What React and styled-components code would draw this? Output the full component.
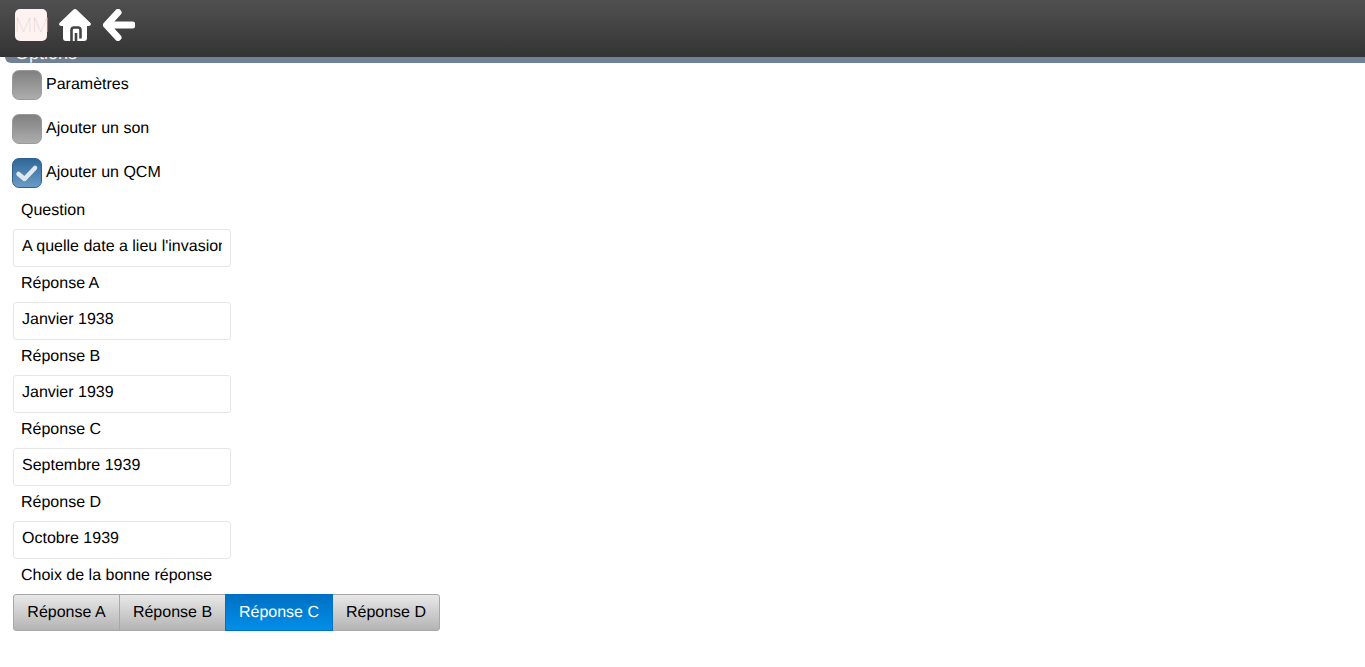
import React from 'react';
import styled, { createGlobalStyle } from 'styled-components';

const GlobalStyle = createGlobalStyle`
  html, body {
    margin: 0;
    padding: 0;
    background: #fff;
    font-family: "Liberation Sans", Arial, sans-serif;
    font-size: 16px;
    color: #000;
    text-rendering: geometricPrecision;
  }
`;

const Page = styled.div`
  width: 1365px;
  height: 667px;
  overflow: hidden;
`;
const Header = styled.header`
  height: 57px;
  display: flex;
  align-items: flex-start;
  gap: 12px;
  padding: 9px 0 0 15px;
  box-sizing: border-box;
  background: linear-gradient(#4f4f4f, #4a4a4a 25%, #333333);
  position: relative;
  z-index: 1;
`;
const Logo = styled.div`
  width: 32px;
  height: 32px;
  border-radius: 5px;
  background: #fff3f2;
  color: #e6cfcd;
  font-family: Roboto, sans-serif;
  font-weight: 100;
  font-size: 20px;
  line-height: 32px;
  text-align: center;
`;
const IconSlot = styled.svg`
  width: 32px;
  height: 32px;
  display: block;
`;
const Strip = styled.div`
  height: 6px;
  margin-left: 5px;
  background: #6f8196;
  border-radius: 0 0 0 10px;
  overflow: hidden;
  position: relative;
`;
const StripTitle = styled.span`
  position: absolute;
  left: 10px;
  top: -14px;
  color: #f0f0f0;
  font-size: 18px;
  line-height: 20px;
`;
const Content = styled.main`
  padding: 7px 0 0 12px;
`;
const CheckRow = styled.div`
  display: flex;
  align-items: center;
  gap: 4px;
  height: 30px;
  margin-bottom: 14px;
`;
const Box = styled.div`
  width: 30px;
  height: 30px;
  box-sizing: border-box;
  border-radius: 7px;
  border: 1px solid ${({ $on }) => ($on ? '#2f5f8f' : '#9a9a9a')};
  background: ${({ $on }) =>
    $on ? 'linear-gradient(#2f6799, #6a9cc6)' : 'linear-gradient(#808080, #adadad)'};
  display: flex;
  align-items: center;
  justify-content: center;
`;
const Form = styled.div`
  margin-top: 1px;
  padding-left: 1px;
`;
const Label = styled.div`
  height: 18px;
  line-height: 18px;
  padding-left: 8px;
  margin-bottom: 9px;
`;
const Field = styled.input`
  display: block;
  width: 218px;
  height: 38px;
  box-sizing: border-box;
  border: 1px solid #e6e6e6;
  border-radius: 3px;
  padding: 0 8px 2px;
  margin: 0 0 8px;
  outline: none;
  background: #fff;
  color: #000;
  font-family: "Liberation Sans", Arial, sans-serif;
  font-size: 16px;
  text-rendering: geometricPrecision;
`;
const Segments = styled.div`
  display: flex;
  height: 37px;
`;
const Segment = styled.div`
  width: ${({ $wide }) => ($wide ? '108px' : '107px')};
  box-sizing: border-box;
  line-height: 35px;
  text-align: center;
  color: ${({ $on }) => ($on ? '#fff' : '#000')};
  background: ${({ $on }) =>
    $on ? 'linear-gradient(#0070c4, #008fe8)' : 'linear-gradient(#e8e8e8, #b4b4b4)'};
  border: 1px solid ${({ $on }) => ($on ? '#0070c4' : '#a8a8a8')};
  margin-left: ${({ $first }) => ($first ? '0' : '-1px')};
  border-radius: ${({ $first, $last }) =>
    $first ? '3px 0 0 3px' : $last ? '0 3px 3px 0' : '0'};
  position: relative;
  z-index: ${({ $on }) => ($on ? 1 : 0)};
`;

const CheckGlyph = () => (
  <svg width="26" height="22" viewBox="0 0 26 22">
    <path d="M4.5 12 L10.5 17 L21 6" fill="none" stroke="#dfe8f0" strokeWidth="4.5" strokeLinecap="round" strokeLinejoin="round" />
  </svg>
);

const answers = [
  ['Question', "A quelle date a lieu l'invasion de la Pologne ?"],
  ['Réponse A', 'Janvier 1938'],
  ['Réponse B', 'Janvier 1939'],
  ['Réponse C', 'Septembre 1939'],
  ['Réponse D', 'Octobre 1939'],
];
const choices = ['Réponse A', 'Réponse B', 'Réponse C', 'Réponse D'];

export default function App() {
  return (
    <Page>
      <GlobalStyle />
      <Header>
        <Logo>MM</Logo>
        <IconSlot viewBox="0 0 32 32">
          <path
            fill="#fff"
            d="M16 0 Q17 0 18 1 L31.5 14 Q33 16 30 17 L28 17 L28 29 Q28 32 25 32 L7 32 Q4 32 4 29 L4 17 L2 17 Q-1 16 .5 14 L14 1 Q15 0 16 0 Z"
          />
          <path
            d="M12.5 32 L12.5 21 Q12.5 18.5 15 18.5 L19 18.5 Q21.5 18.5 21.5 21 L21.5 29.5 M17 32 L17 24"
            fill="none"
            stroke="#444"
            strokeWidth="2.6"
          />
        </IconSlot>
        <IconSlot viewBox="0 0 32 32">
          <path
            d="M15 3.5 L3.5 16 L15 28.5 M5 16 L29 16"
            fill="none"
            stroke="#fff"
            strokeWidth="7"
            strokeLinecap="round"
            strokeLinejoin="round"
          />
        </IconSlot>
      </Header>
      <Strip>
        <StripTitle>Options</StripTitle>
      </Strip>
      <Content>
        <CheckRow><Box /><span>Paramètres</span></CheckRow>
        <CheckRow><Box /><span>Ajouter un son</span></CheckRow>
        <CheckRow><Box $on><CheckGlyph /></Box><span>Ajouter un QCM</span></CheckRow>
        <Form>
          {answers.map(([label, value]) => (
            <React.Fragment key={label}>
              <Label>{label}</Label>
              <Field readOnly defaultValue={value} />
            </React.Fragment>
          ))}
          <Label>Choix de la bonne réponse</Label>
          <Segments>
            {choices.map((c, i) => (
              <Segment key={c} $on={i === 2} $first={i === 0} $last={i === 3} $wide={i >= 2}>{c}</Segment>
            ))}
          </Segments>
        </Form>
      </Content>
    </Page>
  );
}
